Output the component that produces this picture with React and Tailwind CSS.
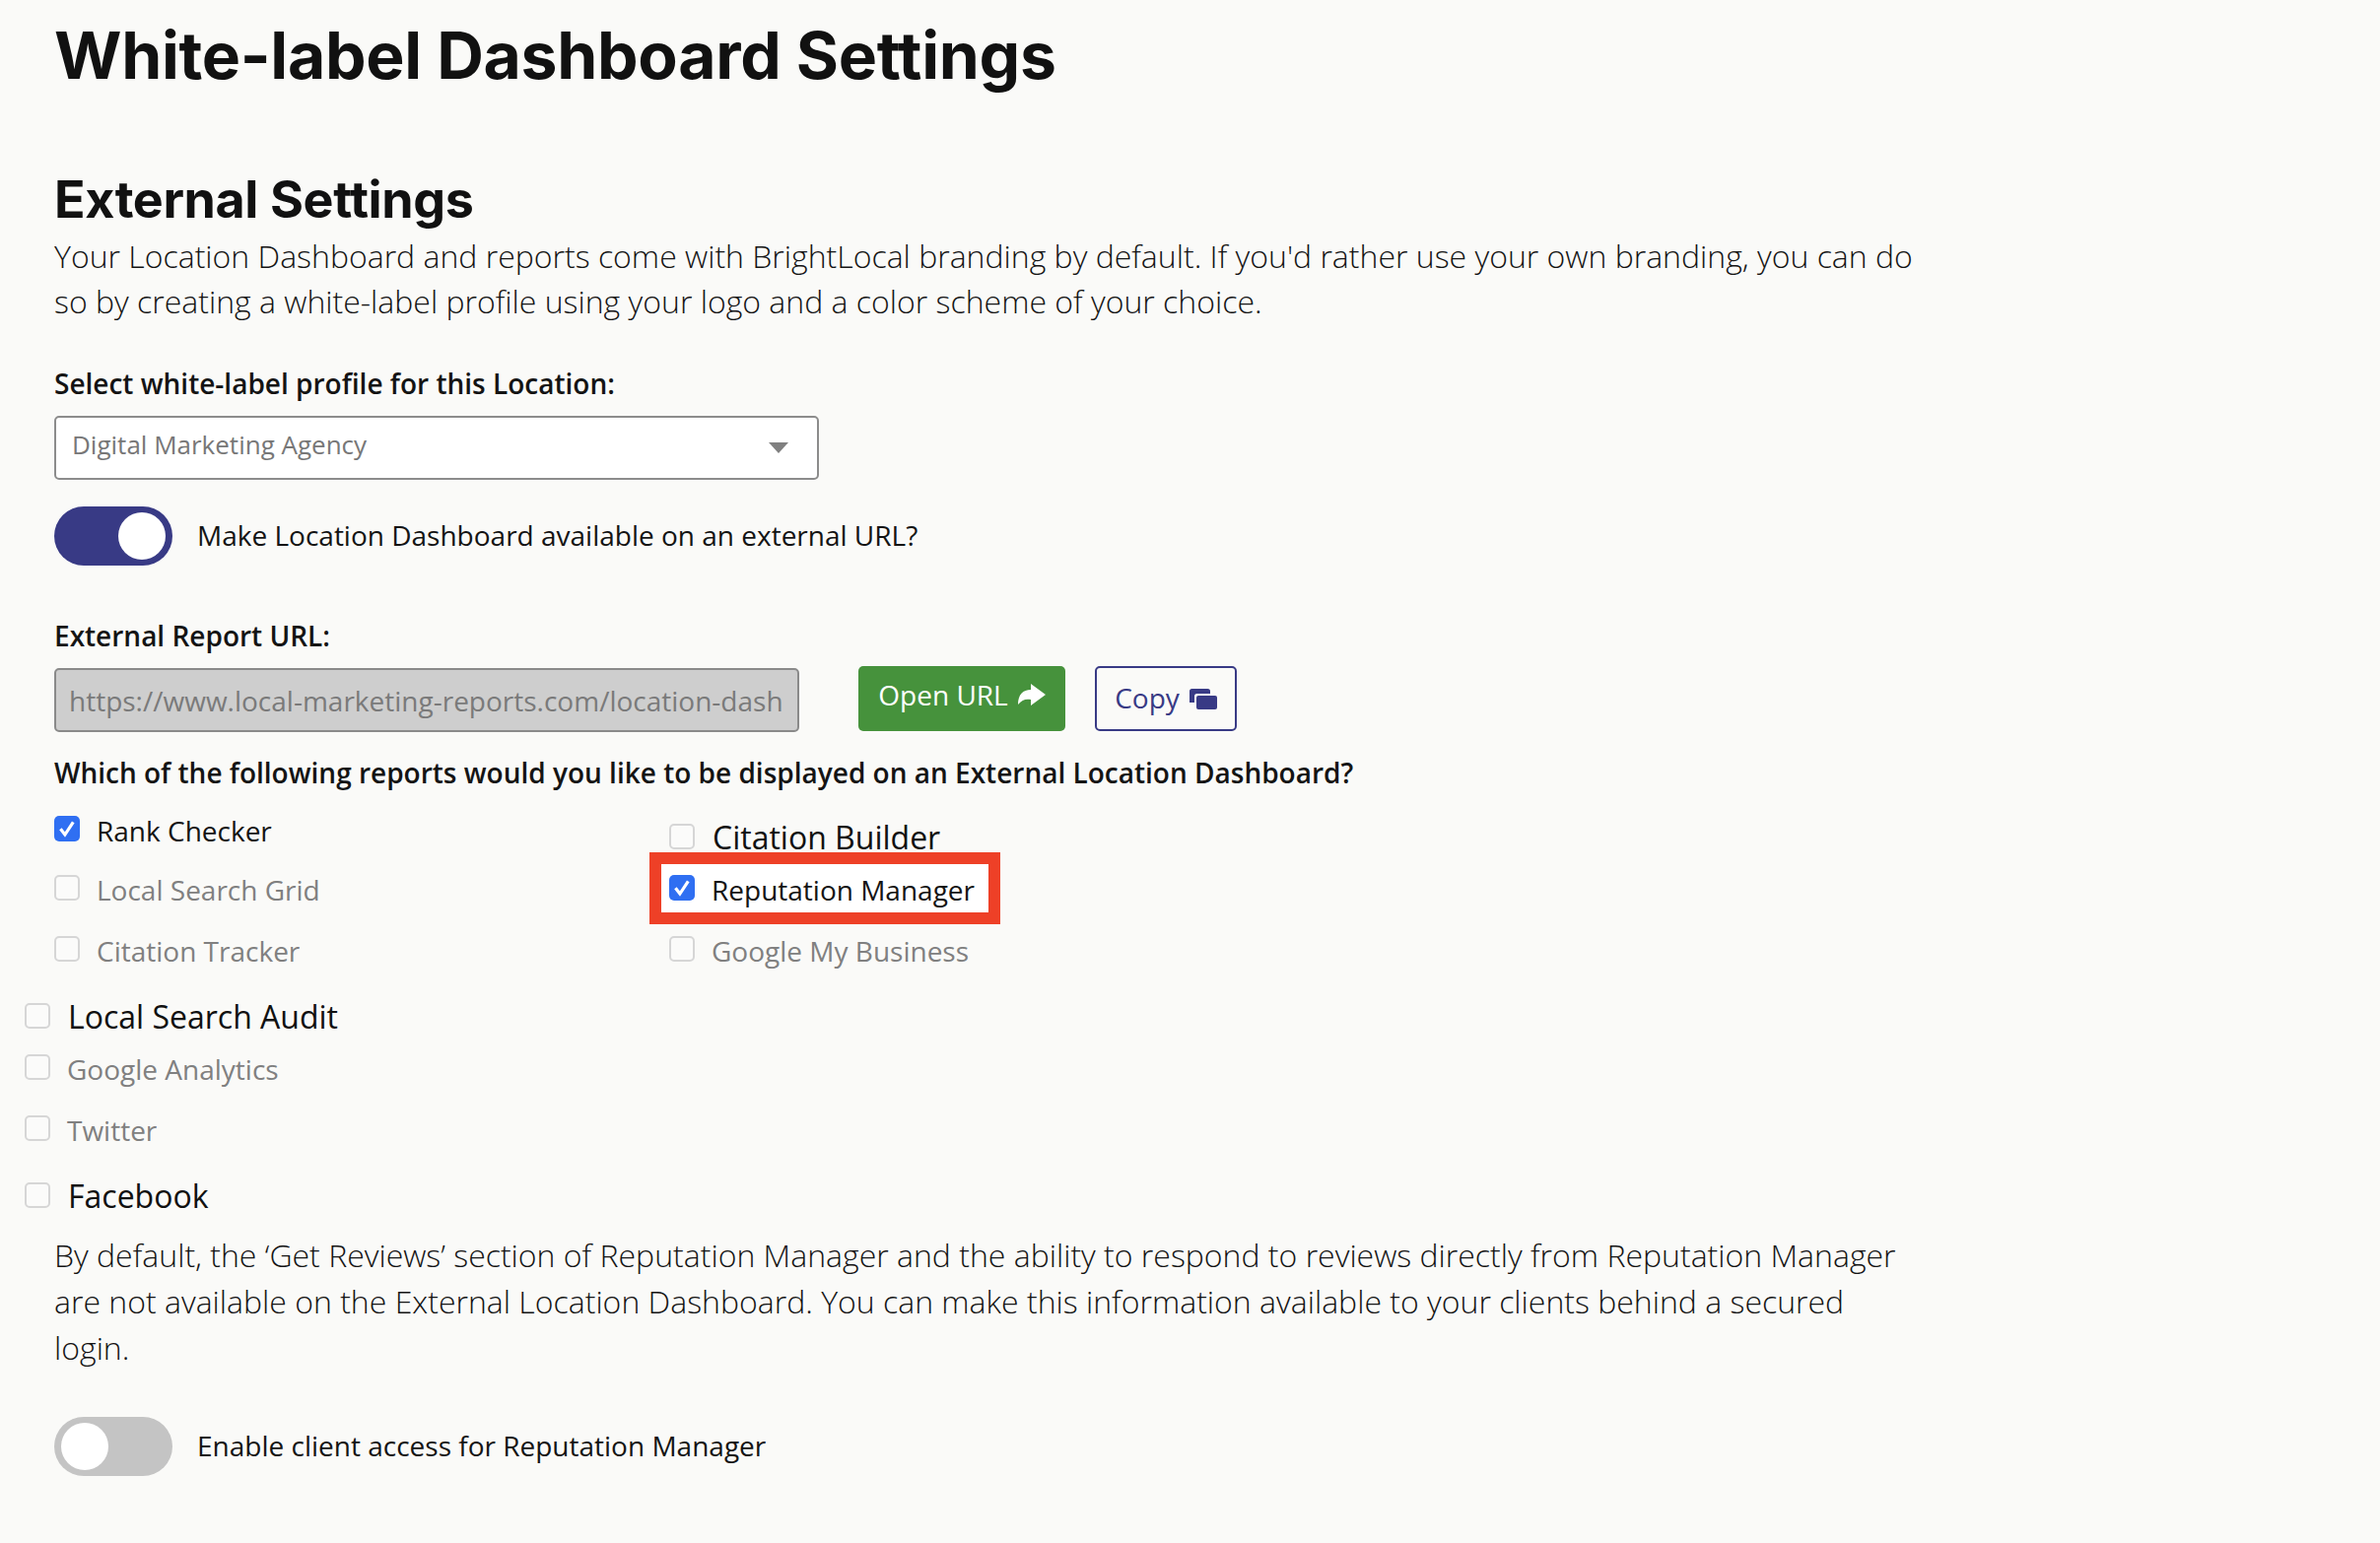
function CheckBox({ checked }) {
  if (checked) {
    return (
      <span className="flex w-[26px] h-[26px] shrink-0 items-center justify-center rounded-[5px] bg-[#2f6ff2]">
        <svg viewBox="0 0 16 16" className="w-[24px] h-[24px]">
          <path d="M3.6 8.2 L6.6 12 L12.2 3.6" fill="none" stroke="#fff" strokeWidth="2.1" />
        </svg>
      </span>
    );
  }
  return <span className="block w-[26px] h-[26px] shrink-0 rounded-[5px] border-2 border-[#d6d6d6] bg-[#fbfbfa]" />;
}

function Item({ label, checked, muted, large, className = "" }) {
  let text = "text-[28px] leading-[30px] text-[#141414]";
  if (muted) text = "text-[28px] leading-[30px] text-[#808080]";
  if (large) text = "text-[32px] leading-[28px] text-[#111]";
  return (
    <div className={"flex items-start h-[26px] " + (large ? "gap-[18px] " : "gap-[17px] ") + className}>
      <CheckBox checked={checked} />
      <span className={"whitespace-nowrap " + text}>{label}</span>
    </div>
  );
}

function Toggle({ on, label, className = "" }) {
  return (
    <div className={"flex items-center gap-[25px] " + className}>
      <span
        className={
          "flex w-[120px] h-[60px] items-center rounded-full px-[7px] " +
          (on ? "bg-[#383a85] justify-end" : "bg-[#c4c4c4] justify-start")
        }
      >
        <span className="block w-[48px] h-[48px] rounded-full bg-white" />
      </span>
      <span className="text-[28px] leading-[40px] text-[#141414] -mt-[2px]">{label}</span>
    </div>
  );
}

export default function App() {
  return (
    <div className="min-h-[1566px] bg-[#fafaf8] pl-[55px] pt-[16px] font-['Open_Sans',sans-serif] text-[#141414]">
      <h1 className="text-[66px] leading-[80px] font-bold tracking-[-0.3px] font-['Inter',sans-serif] text-[#111]">
        White-label Dashboard Settings
      </h1>

      <h2 className="mt-[76px] text-[52px] leading-[62px] font-bold tracking-[-0.4px] font-['Inter',sans-serif] text-[#111]">
        External Settings
      </h2>
      <p className="mt-[3px] w-[1890px] text-[32px] leading-[46px] font-light">
        Your Location Dashboard and reports come with BrightLocal branding by default. If you'd rather use your own
        branding, you can do so by creating a white-label profile using your logo and a color scheme of your choice.
      </p>

      <label className="mt-[41px] block text-[28px] leading-[38px] font-semibold">
        Select white-label profile for this Location:
      </label>
      <div className="mt-[14px] flex w-[776px] h-[65px] items-center justify-between rounded-[5px] border-2 border-[#8c8c8c] bg-white pl-[16px] pr-[29px]">
        <span className="text-[26px] leading-[36px] text-[#777] -mt-[8px]">Digital Marketing Agency</span>
        <span className="block w-0 h-0 border-x-[10px] border-t-[11px] border-x-transparent border-t-[#808080]" />
      </div>

      <Toggle on label="Make Location Dashboard available on an external URL?" className="mt-[27px]" />

      <label className="mt-[52px] block text-[28px] leading-[38px] font-semibold">External Report URL:</label>

      <div className="mt-[12px] flex items-start">
        <input
          readOnly
          value="https://www.local-marketing-reports.com/location-dash"
          className="mt-[2px] w-[756px] h-[65px] rounded-[5px] border-2 border-[#8a8a8a] bg-[#cecece] px-[13px] text-[28px] text-[#7a7a7a]"
        />
        <button className="ml-[60px] flex w-[210px] h-[66px] items-center justify-center gap-[10px] rounded-[5px] bg-[#46923c] pb-[8px] text-[28px] text-white">
          Open URL
          <svg viewBox="0 0 28 22" className="w-[28px] h-[22px]">
            <path d="M13 6C5 6 0 11 0 21C4 16 8 15 13 16V22L28 11L13 0Z" fill="#fff" />
          </svg>
        </button>
        <button className="ml-[30px] flex w-[144px] h-[66px] items-center justify-center gap-[10px] rounded-[5px] border-2 border-[#383a85] pb-[3px] text-[28px] text-[#383a85]">
          Copy
          <svg viewBox="0 0 28 21" className="w-[28px] h-[21px] mt-[3px]">
            <path d="M0 14V2.5A2.5 2.5 0 0 1 2.5 0h16A2.5 2.5 0 0 1 21 2.5V5H7.5A2.5 2.5 0 0 0 5 7.5V14z" fill="#383a85" />
            <rect x="7" y="7" width="21" height="14" rx="2" fill="#383a85" />
          </svg>
        </button>
      </div>

      <p className="mt-[21px] text-[28px] leading-[40px] font-semibold whitespace-nowrap">
        Which of the following reports would you like to be displayed on an External Location Dashboard?
      </p>

      <div className="mt-[24px] grid w-[1000px] grid-cols-[624px_1fr]">
        <div>
          <Item label="Rank Checker" checked />
          <Item label="Local Search Grid" muted className="mt-[34px]" />
          <Item label="Citation Tracker" muted className="mt-[36px]" />
        </div>
        <div className="pt-[8px]">
          <Item label="Citation Builder" large />
          <div className="relative mt-[26px]">
            {/* red highlight around this row */}
            <div className="absolute left-[-20px] top-[-23px] w-[356px] h-[73px] border-[12px] border-[#ee4027] bg-white" />
            <Item label="Reputation Manager" checked className="relative" />
          </div>
          <Item label="Google My Business" muted className="mt-[36px]" />
        </div>
      </div>

      <div className="-ml-[30px] mt-[42px]">
        <Item label="Local Search Audit" large />
        <Item label="Google Analytics" muted className="mt-[26px]" />
        <Item label="Twitter" muted className="mt-[36px]" />
        <Item label="Facebook" large className="mt-[42px]" />
      </div>

      <p className="mt-[24px] w-[1890px] text-[32px] leading-[47px] font-light">
        By default, the ‘Get Reviews’ section of Reputation Manager and the ability to respond to reviews directly from
        Reputation Manager are not available on the External Location Dashboard. You can make this information available
        to your clients behind a secured login.
      </p>

      <Toggle label="Enable client access for Reputation Manager" className="mt-[47px]" />
    </div>
  );
}
